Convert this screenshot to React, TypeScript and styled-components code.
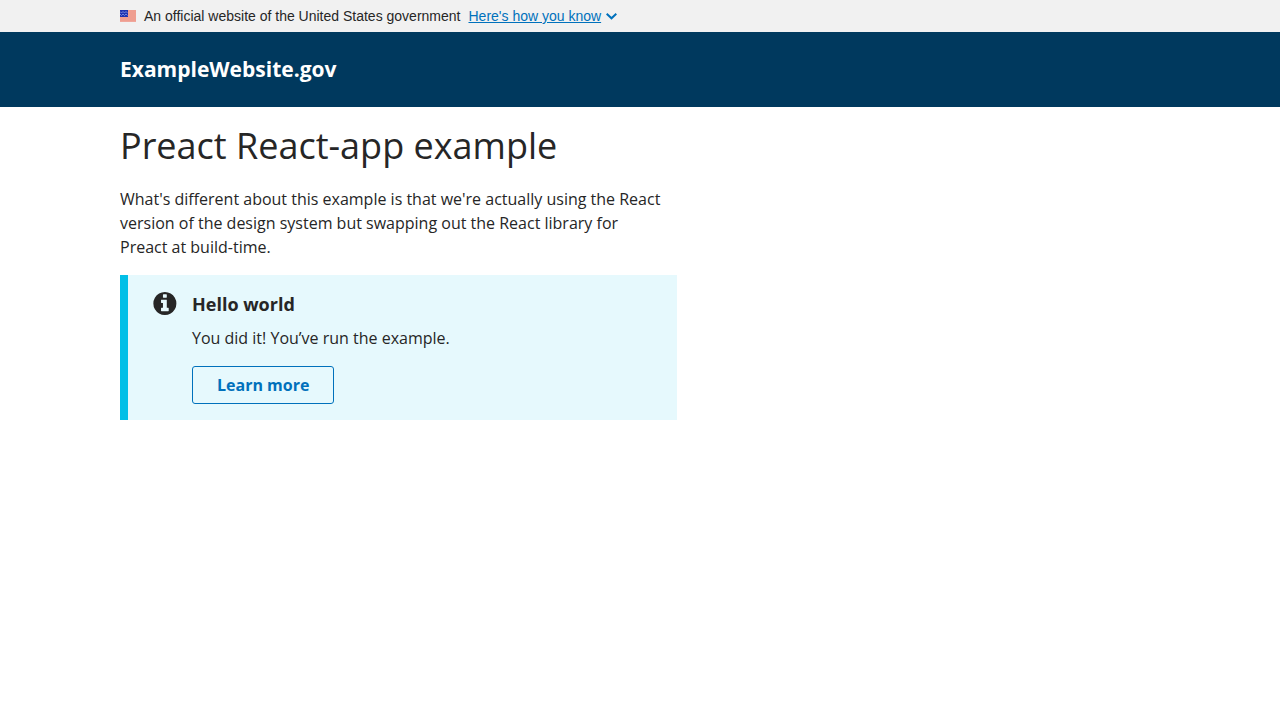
import React from 'react';
import styled, { createGlobalStyle } from 'styled-components';

const GlobalStyle = createGlobalStyle`
  *, *::before, *::after { box-sizing: border-box; }
  body {
    margin: 0;
    background: #ffffff;
    color: #262626;
    font-family: 'Open Sans', 'Liberation Sans', sans-serif;
    font-size: 16px;
    line-height: 24px;
    -webkit-font-smoothing: antialiased;
  }
`;

const Container = styled.div`
  max-width: 1072px;
  margin: 0 auto;
  padding: 0 16px;
`;

const Banner = styled.section`
  background: #f1f1f1;
  font-family: 'Liberation Sans', Arial, sans-serif;
  font-size: 14px;
  line-height: 16px;
`;

const BannerRow = styled(Container)`
  display: flex;
  flex-wrap: wrap;
  align-items: center;
  gap: 8px;
  padding-top: 8px;
  padding-bottom: 8px;
`;

const BannerText = styled.p`
  margin: 0;
`;

const BannerToggle = styled.button`
  display: flex;
  align-items: center;
  gap: 4px;
  padding: 0;
  border: 0;
  background: none;
  color: #0071bc;
  font: inherit;
  cursor: pointer;
`;

const ToggleLabel = styled.span`
  text-decoration: underline;
`;

const Header = styled.header`
  padding: 20px 0;
  background: #00395e;
`;

const SiteName = styled.div`
  color: #ffffff;
  font-size: 21px;
  font-weight: 700;
  line-height: 35px;
`;

const Column = styled.div`
  max-width: 557px;
`;

const Title = styled.h1`
  margin: 16px 0 18px;
  font-size: 36px;
  font-weight: 400;
  line-height: 46px;
`;

const Intro = styled.p`
  max-width: 548px;
  margin: 0 0 16px;
`;

const Alert = styled.section`
  display: flex;
  align-items: flex-start;
  gap: 16px;
  padding: 16px 16px 16px 24px;
  border-left: 8px solid #02bfe7;
  background: #e6f9fd;
`;

const InfoIcon = styled.svg`
  flex: none;
  width: 24px;
  height: 24px;
  fill: #262626;
`;

const AlertHeading = styled.h2`
  margin: 0 0 8px;
  font-size: 18px;
  font-weight: 700;
  line-height: 27px;
`;

const AlertText = styled.p`
  margin: 0 0 16px;
`;

const OutlineButton = styled.button`
  display: block;
  padding: 8px 24px;
  border: 1px solid #0071bc;
  border-radius: 3px;
  background: transparent;
  color: #0071bc;
  font-family: inherit;
  font-size: 16px;
  font-weight: 700;
  line-height: 20px;
  cursor: pointer;
`;

const Flag = () => (
  <svg width="16" height="12" viewBox="0 0 16 12" role="img" aria-label="U.S. flag">
    <rect width="16" height="12" fill="#ef9e90" />
    <rect y="11" width="16" height="1" fill="#f0a79c" />
    <rect width="8" height="7" fill="#1e33b1" />
    <path
      d="M0 1.500 1.500 3 3 1.500 4.500 3 6 1.500 7.500 3M0 4 1.500 5.500 3 4 4.500 5.500 6 4 7.500 5.500"
      fill="none"
      stroke="#8896e4"
      strokeWidth="0.8"
    />
  </svg>
);

const Chevron = () => (
  <svg width="12" height="8" viewBox="0 0 12 8" aria-hidden="true">
    <path d="M1.7 1.7 6.5 6.3 11.3 1.7" fill="none" stroke="#0071bc" strokeWidth="2" />
  </svg>
);

export default function App() {
  return (
    <>
      <GlobalStyle />
      <Banner aria-label="Official government website">
        <BannerRow>
          <Flag />
          <BannerText>An official website of the United States government</BannerText>
          <BannerToggle type="button" aria-expanded={false}>
            <ToggleLabel>Here's how you know</ToggleLabel>
            <Chevron />
          </BannerToggle>
        </BannerRow>
      </Banner>
      <Header>
        <Container>
          <SiteName>ExampleWebsite.gov</SiteName>
        </Container>
      </Header>
      <Container as="main">
        <Column>
          <Title>Preact React-app example</Title>
          <Intro>
            What's different about this example is that we're actually using the React version of
            the design system but swapping out the React library for Preact at build-time.
          </Intro>
          <Alert aria-labelledby="alert-heading">
            <InfoIcon viewBox="-90 -64 1600 1600" overflow="visible" aria-hidden="true">
              <path
                fillRule="evenodd"
                d="M1024 1248v-160q0-14-9-23t-23-9h-96v-512q0-14-9-23t-23-9h-320q-14 0-23 9t-9 23v160q0 14 9 23t23 9h96v320h-96q-14 0-23 9t-9 23v160q0 14 9 23t23 9h448q14 0 23-9t9-23zM896 352v-160q0-14-9-23t-23-9h-192q-14 0-23 9t-9 23v160q0 14 9 23t23 9h192q14 0 23-9t9-23zM1536 768q0 209-103 385.500t-279.500 279.500t-385.500 103t-385.500-103t-279.500-279.500t-103-385.500t103-385.500t279.500-279.500t385.500-103t385.500 103t279.500 279.500t103 385.500z"
              />
            </InfoIcon>
            <div>
              <AlertHeading id="alert-heading">Hello world</AlertHeading>
              <AlertText>You did it! You’ve run the example.</AlertText>
              <OutlineButton type="button">Learn more</OutlineButton>
            </div>
          </Alert>
        </Column>
      </Container>
    </>
  );
}
